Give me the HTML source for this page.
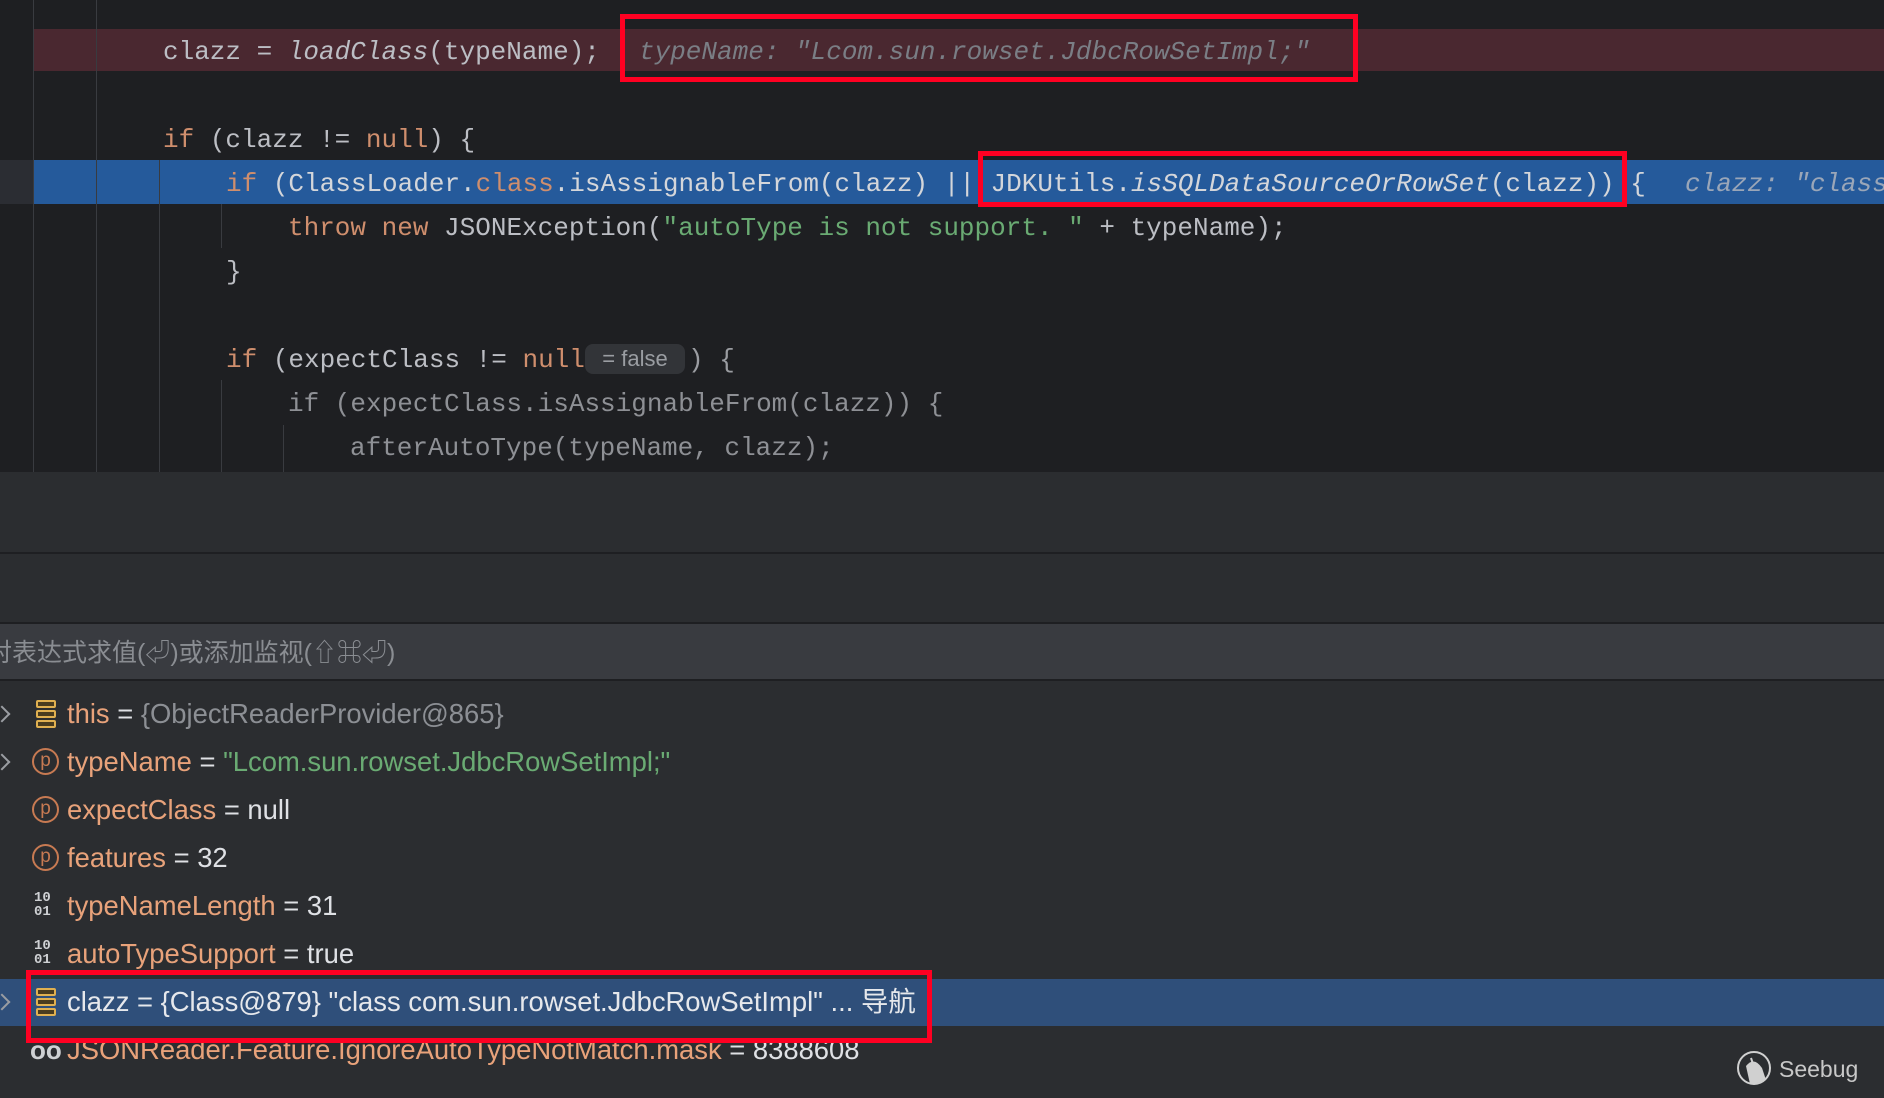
<!DOCTYPE html>
<html><head><meta charset="utf-8"><style>
*{margin:0;padding:0;box-sizing:border-box}
body{width:1884px;height:1098px;background:#2b2d30;position:relative;overflow:hidden;font-family:"Liberation Sans","Noto Sans CJK SC",sans-serif}
.ed{position:absolute;left:0;top:0;width:1884px;height:472px;background:#1e1f22}
.row{position:absolute;left:0;right:0;height:44px}
.c{position:absolute;font-family:"Liberation Mono",monospace;font-size:26px;line-height:44px;color:#bcbec4;white-space:pre}
.k{color:#cf8e6d}.s{color:#6aab73}.i{font-style:italic}.h{color:#7a7e85;font-style:italic}
.vl{position:absolute;width:1px;background:#393b40}
.box{position:absolute;border:5px solid #ff0022}
.v{position:absolute;left:67px;font-size:27.4px;line-height:48px;color:#dfe1e5;white-space:pre}
.n{color:#e8a27a}.g{color:#8c8f94}
.arr{position:absolute;left:-4px;width:12px;height:12px;border-right:2px solid #9a9da2;border-top:2px solid #9a9da2;transform:rotate(45deg)}
.pc{position:absolute;left:32px;width:27px;height:27px;border:2px solid #c77a52;border-radius:50%;color:#c77a52;font-size:19px;line-height:21px;text-align:center}
.bits{position:absolute;left:34px;font-family:"Liberation Mono",monospace;font-size:14px;line-height:14px;color:#cfd1d4;font-weight:bold}
.stk{position:absolute;left:36px;width:20px}
.stk div{height:8px;border:2px solid #e0b050;border-radius:2px;margin-bottom:2px;background:#4a3c1e}
</style></head><body>
<div class="ed">
  <div class="row" style="top:29px;height:42px;left:34px;background:#4a2830"></div>
  <div class="row" style="top:160px;background:#255a9b;left:34px"></div>
  <div class="row" style="top:160px;width:34px;right:auto;background:#2b2d33"></div>
  <div class="vl" style="left:33px;top:0;height:472px"></div>
  <div class="vl" style="left:96px;top:0;height:472px"></div>
  <div class="vl" style="left:159px;top:160px;height:312px"></div>
  <div class="vl" style="left:221px;top:204px;height:44px"></div>
  <div class="vl" style="left:221px;top:380px;height:92px"></div>
  <div class="vl" style="left:283px;top:425px;height:47px"></div>
  <div class="c" style="left:163px;top:30px">clazz = <span class="i">loadClass</span>(typeName);</div>
  <div class="c h" style="left:639px;top:30px">typeName: "Lcom.sun.rowset.JdbcRowSetImpl;"</div>
  <div class="c" style="left:163px;top:118px"><span class="k">if</span> (clazz != <span class="k">null</span>) {</div>
  <div class="c" style="left:226px;top:162px;color:#d4d6da"><span class="k">if</span> (ClassLoader.<span class="k">class</span>.isAssignableFrom(clazz) || JDKUtils.<span class="i">isSQLDataSourceOrRowSet</span>(clazz)) {</div>
  <div class="c h" style="left:1685px;top:162px;color:#9aa6b8">clazz: "class</div>
  <div class="c" style="left:288px;top:206px"><span class="k">throw new</span> JSONException(<span class="s">"autoType is not support. "</span> + typeName);</div>
  <div class="c" style="left:226px;top:250px">}</div>
  <div class="c" style="left:226px;top:338px"><span class="k">if</span> (expectClass != <span class="k">null</span></div>
  <div style="position:absolute;left:585px;top:344px;width:100px;height:30px;border-radius:8px;background:#323438;color:#9a9da2;font-size:22px;line-height:30px;text-align:center">= false</div>
  <div class="c" style="left:688px;top:338px;color:#9a9ca1">) {</div>
  <div class="c" style="left:288px;top:382px;color:#8e9095">if (expectClass.isAssignableFrom(clazz)) {</div>
  <div class="c" style="left:350px;top:426px;color:#8e9095">afterAutoType(typeName, clazz);</div>
</div>
<div style="position:absolute;left:0;top:552px;width:1884px;height:2px;background:#1e1f22"></div>
<div style="position:absolute;left:0;top:622px;width:1884px;height:2px;background:#1e1f22"></div>
<div style="position:absolute;left:0;top:624px;width:1884px;height:55px;background:#393b40"></div>
<div style="position:absolute;left:0;top:679px;width:1884px;height:2px;background:#1e1f22"></div>
<div style="position:absolute;left:-13px;top:632px;font-size:25px;line-height:42px;color:#8a8d92;white-space:pre">对表达式求值(⏎)或添加监视(⇧⌘⏎)</div>

<div style="position:absolute;left:0;top:979px;width:1884px;height:47px;background:#2f4f7a"></div>

<div class="arr" style="top:708px"></div>
<div class="stk" style="top:700px"><div></div><div></div><div></div></div>
<div class="v" style="top:690px"><span class="n">this</span> = <span class="g">{ObjectReaderProvider@865}</span></div>

<div class="arr" style="top:756px"></div>
<div class="pc" style="top:748px">p</div>
<div class="v" style="top:738px"><span class="n">typeName</span> = <span class="s">"Lcom.sun.rowset.JdbcRowSetImpl;"</span></div>

<div class="pc" style="top:796px">p</div>
<div class="v" style="top:786px"><span class="n">expectClass</span> = null</div>

<div class="pc" style="top:844px">p</div>
<div class="v" style="top:834px"><span class="n">features</span> = 32</div>

<div class="bits" style="top:891px">10<br>01</div>
<div class="v" style="top:882px"><span class="n">typeNameLength</span> = 31</div>

<div class="bits" style="top:939px">10<br>01</div>
<div class="v" style="top:930px"><span class="n">autoTypeSupport</span> = true</div>

<div class="arr" style="top:996px"></div>
<div class="stk" style="top:988px"><div></div><div></div><div></div></div>
<div class="v" style="top:978px;color:#e6e8ec">clazz = {Class@879} "class com.sun.rowset.JdbcRowSetImpl" ... 导航</div>

<div class="v" style="top:1026px;left:30px;color:#cfd1d4;font-size:26px;font-weight:bold">oo</div>
<div class="v" style="top:1026px"><span class="n">JSONReader.Feature.IgnoreAutoTypeNotMatch.mask</span> = 8388608</div>

<div class="box" style="left:620px;top:14px;width:738px;height:68px"></div>
<div class="box" style="left:978px;top:151px;width:649px;height:56px"></div>
<div class="box" style="left:26px;top:970px;width:906px;height:73px"></div>

<svg style="position:absolute;left:1736px;top:1050px" width="40" height="40" viewBox="0 0 40 40">
<circle cx="18" cy="18" r="16" fill="none" stroke="#d0d0d0" stroke-width="2"/>
<path d="M10 16 Q18 6 26 18 L30 30 Q20 34 14 34 Z" fill="#d0d0d0"/>
<path d="M17 14 L15 8" stroke="#d0d0d0" stroke-width="2"/>
</svg>
<div style="position:absolute;left:1779px;top:1052px;font-size:23px;line-height:34px;color:#c8c8c8">Seebug</div>
</body></html>
